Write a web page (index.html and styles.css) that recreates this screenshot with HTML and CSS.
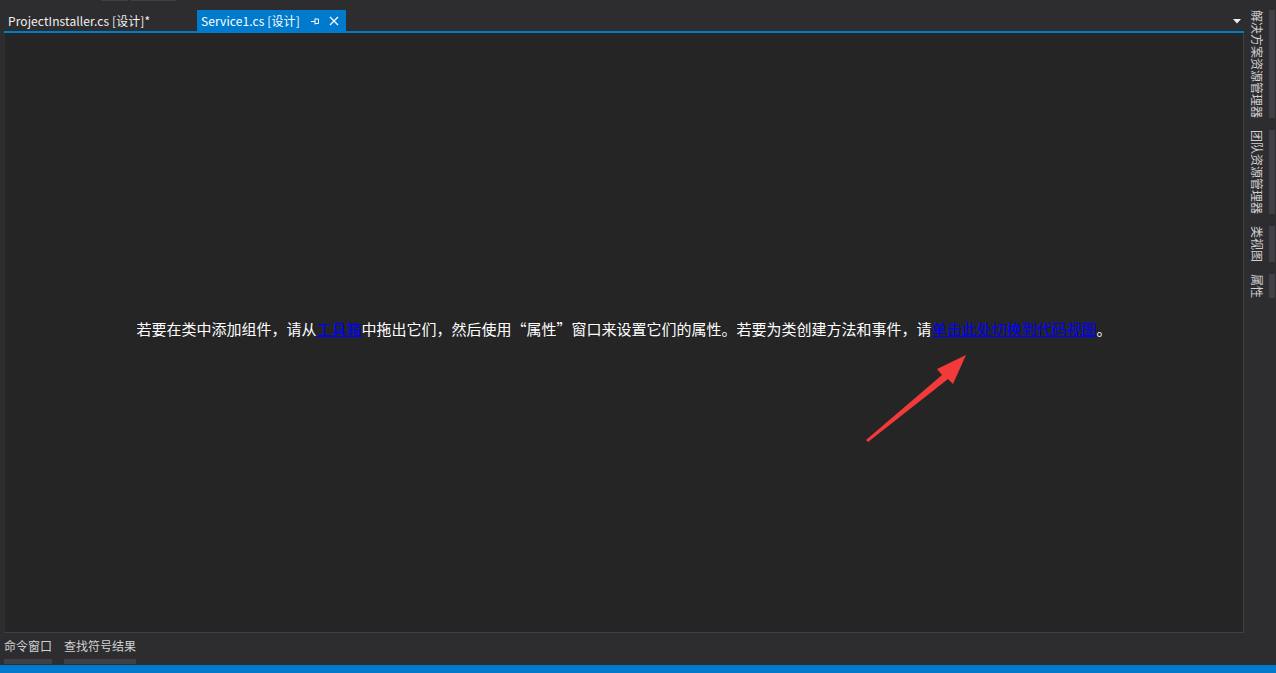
FILE: index.html
```html
<!DOCTYPE html>
<html lang="zh-CN">
<head>
<meta charset="utf-8">
<title>Service1.cs [设计]</title>
<link rel="stylesheet" href="styles.css">
</head>
<body>
<div class="app">
  <div class="topstrip">
    <span class="tick t1"></span>
    <span class="tick t2"></span>
  </div>
  <div class="main">
    <div class="doc">
      <div class="tabs">
        <div class="tab">ProjectInstaller.cs [设计]*</div>
        <div class="tab active">
          <span class="tab-label">Service1.cs [设计]</span>
          <svg class="pin" width="10" height="10" viewBox="0 0 10 10">
            <path d="M1 5.5H5M5 2.5V8.5M5 3H8.5V7.5H5" fill="none" stroke="#fff" stroke-width="1"/>
          </svg>
          <svg class="close" width="10" height="10" viewBox="0 0 10 10">
            <path d="M1 1L9 9M9 1L1 9" stroke="#fff" stroke-width="1.3"/>
          </svg>
        </div>
        <div class="tabs-fill"></div>
        <svg class="dropdown" width="8" height="5" viewBox="0 0 8 5">
          <path d="M0 0H8L4 4.5Z" fill="#f1f1f1"/>
        </svg>
      </div>
      <div class="tabline"></div>
      <div class="editor">
        <p class="hint">若要在类中添加组件，请从<a href="#">工具箱</a>中拖出它们，然后使用“属性”窗口来设置它们的属性。若要为类创建方法和事件，请<a href="#">单击此处切换到代码视图</a>。</p>
        <svg class="arrow" width="110" height="95" viewBox="0 0 110 95">
          <polygon points="2,89 78,24 73,18 102,4 89,33 84,28 4,91" fill="#f23a3a"/>
        </svg>
      </div>
      <div class="bottomtabs">
        <div class="btab"><span class="btab-label">命令窗口</span><span class="btab-bar"></span></div>
        <div class="btab"><span class="btab-label">查找符号结果</span><span class="btab-bar"></span></div>
      </div>
    </div>
    <div class="sidebar">
      <div class="vtab"><span class="vtab-label">解决方案资源管理器</span><span class="vtab-bar"></span></div>
      <div class="vtab"><span class="vtab-label">团队资源管理器</span><span class="vtab-bar"></span></div>
      <div class="vtab"><span class="vtab-label">类视图</span><span class="vtab-bar"></span></div>
      <div class="vtab"><span class="vtab-label">属性</span><span class="vtab-bar"></span></div>
    </div>
  </div>
  <div class="status"></div>
</div>
</body>
</html>
```

FILE: styles.css
```css
* { box-sizing: border-box; }
html, body { margin: 0; padding: 0; }
body {
  background: #2d2d30;
  font-family: "Noto Sans CJK SC", "Noto Sans", sans-serif;
  color: #f1f1f1;
  width: 1276px;
  height: 673px;
  overflow: hidden;
}
.app {
  display: flex;
  flex-direction: column;
  height: 673px;
}
.topstrip {
  height: 10px;
  display: flex;
  gap: 3px;
  padding-left: 101px;
}
.tick { height: 1px; background: #3f3f46; display: block; }
.t1 { width: 27px; }
.t2 { width: 45px; }

.main {
  flex: 1;
  display: flex;
  min-height: 0;
}
.doc {
  width: 1240px;
  margin-left: 4px;
  display: flex;
  flex-direction: column;
}
.tabs {
  height: 21px;
  display: flex;
  align-items: center;
}
.tab {
  height: 21px;
  font-size: 12px;
  line-height: 21px;
  padding: 0 4px;
  white-space: nowrap;
  color: #f1f1f1;
  letter-spacing: 0.1px;
}
.tab:first-child { width: 193px; }
.tab.active {
  background: #007acc;
  color: #fff;
  width: 149px;
  display: flex;
  align-items: center;
}
.tab-label { flex: 0 0 auto; }
.pin { margin-left: 10px; }
.close { margin-left: 9px; }
.tabs-fill { flex: 1; }
.dropdown { margin-right: 3px; margin-top: 2px; }
.tabline {
  height: 2px;
  background: #007acc;
}
.editor {
  height: 600px;
  background: #252526;
  border-right: 1px solid #3f3f46;
  border-bottom: 1px solid #3f3f46;
  border-left: 1px solid #2d2d30;
  position: relative;
  display: flex;
  justify-content: center;
}
.hint {
  margin: 286px 0 0 0;
  font-size: 15px;
  line-height: 20px;
  color: #ffffff;
  white-space: nowrap;
  height: 20px;
}
.hint a {
  color: #0000ff;
  text-decoration: underline;
}
.arrow {
  position: absolute;
  left: 859px;
  top: 318px;
}
.bottomtabs {
  height: 32px;
  display: flex;
  gap: 12px;
  padding-top: 5px;
}
.btab {
  display: flex;
  flex-direction: column;
}
.btab-label {
  font-size: 12px;
  line-height: 16px;
  color: #d0d0d0;
  white-space: nowrap;
}
.btab-bar {
  height: 5px;
  margin-top: 5px;
  background: #3f3f46;
}
.sidebar {
  width: 32px;
  display: flex;
  flex-direction: column;
  gap: 12px;
  padding-left: 7px;
}
.vtab {
  display: flex;
  gap: 5px;
}
.vtab-label {
  writing-mode: vertical-rl;
  text-orientation: sideways;
  font-size: 12px;
  line-height: 13px;
  width: 13px;
  color: #d0d0d0;
  white-space: nowrap;
}
.vtab-bar {
  width: 6px;
  background: #3f3f46;
}
.status {
  height: 8px;
  background: #007acc;
}
```
